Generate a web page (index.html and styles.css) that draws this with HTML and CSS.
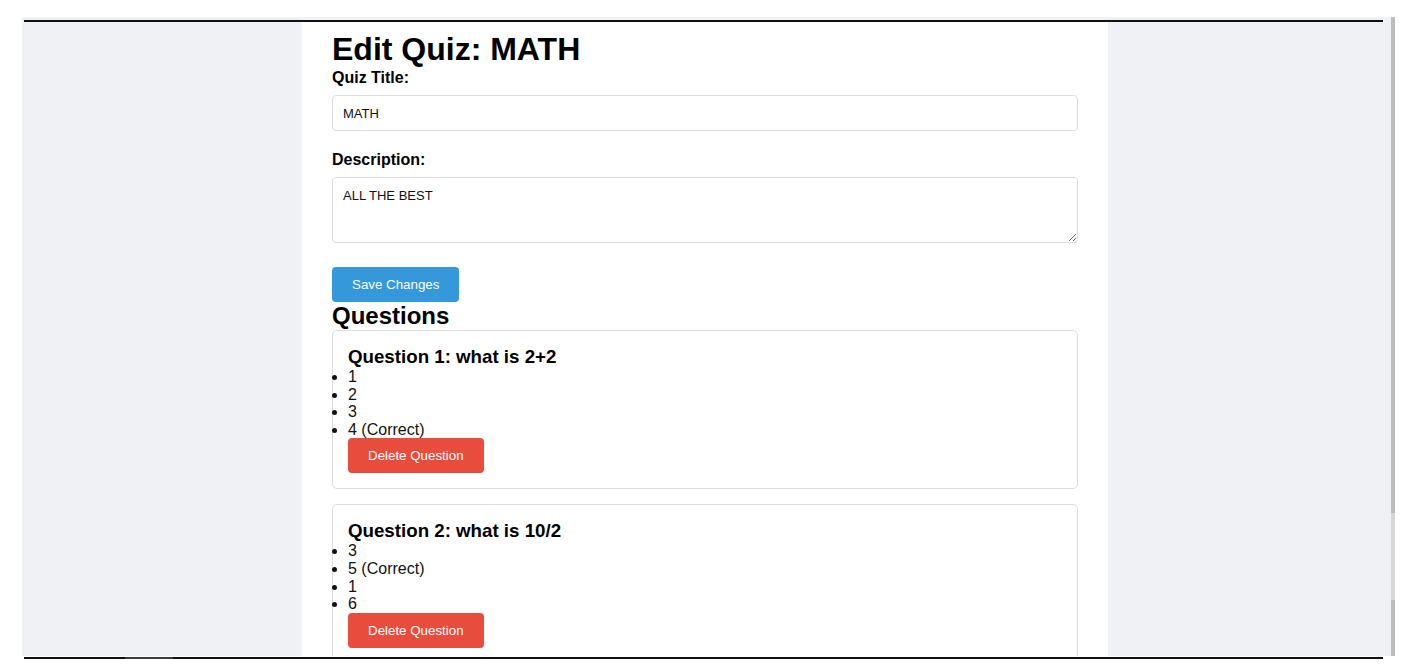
FILE: index.html
```html
<!DOCTYPE html>
<html lang="en">
<head>
<meta charset="utf-8">
<title>Edit Quiz: MATH</title>
<link rel="stylesheet" href="styles.css">
</head>
<body>
<div class="screen">
  <div class="window">
    <div class="viewport">
      <div class="rule-top"></div>
      <main class="page">
        <h1 class="title">Edit Quiz: MATH</h1>
        <form class="quiz-form">
          <label class="label" for="qt">Quiz Title:</label>
          <input class="field" id="qt" type="text" value="MATH">
          <label class="label" for="qd">Description:</label>
          <textarea class="field area" id="qd">ALL THE BEST</textarea>
          <button class="btn btn-save" type="button">Save Changes</button>
        </form>
        <h2 class="section">Questions</h2>
        <div class="card">
          <h3 class="q-title">Question 1: what is 2+2</h3>
          <ul class="options">
            <li>1</li>
            <li>2</li>
            <li>3</li>
            <li>4 (Correct)</li>
          </ul>
          <button class="btn btn-delete" type="button">Delete Question</button>
        </div>
        <div class="card">
          <h3 class="q-title">Question 2: what is 10/2</h3>
          <ul class="options">
            <li>3</li>
            <li>5 (Correct)</li>
            <li>1</li>
            <li>6</li>
          </ul>
          <button class="btn btn-delete" type="button">Delete Question</button>
        </div>
      </main>
    </div>
    <div class="scrollbar"></div>
  </div>
  <div class="rule-bottom"></div>
</div>
</body>
</html>
```
FILE: styles.css
```css
html, body {
  margin: 0;
  background: #fff;
  font-family: "Liberation Sans", Arial, sans-serif;
  color: #000;
}

.screen {
  padding: 17px 0 0 22px;
}

.window {
  display: flex;
}

.viewport {
  width: 1369px;
  height: 639px;
  background: #f0f1f5;
  overflow: hidden;
  padding-top: 3px;
  box-sizing: border-box;
  display: flex;
  flex-direction: column;
}

.rule-top {
  flex: none;
  margin-left: 2px;
  width: 1359px;
  height: 2px;
  background: #111;
}

.scrollbar {
  width: 4px;
  height: 639px;
  background: linear-gradient(#bcbcbc 0 496px, #d6d6d6 496px 583px, #bcbcbc 583px);
}

.rule-bottom {
  margin: 1px 0 0 2px;
  width: 1359px;
  height: 2px;
  background: linear-gradient(90deg, #111 0 101px, #3a3a3a 101px 149px, #111 149px);
}

.page {
  flex: 1;
  margin-left: 280px;
  width: 806px;
  background: #fff;
  padding: 9px 30px 0;
  box-sizing: border-box;
}

.title {
  font-size: 32px;
  font-weight: bold;
  margin: 0;
}

.quiz-form {
  margin: 0;
}

.label {
  display: block;
  font-size: 16px;
  font-weight: bold;
  margin: 1px 0 8px;
}

.field {
  display: block;
  width: 100%;
  box-sizing: border-box;
  height: 36px;
  margin: 0 0 20px;
  padding: 0 10px;
  border: 1px solid #ddd;
  border-radius: 4px;
  font-family: "Liberation Sans", Arial, sans-serif;
  font-size: 13px;
  color: #111;
  background: #fff;
}

.area {
  height: 66px;
  padding: 10px;
  margin-bottom: 24px;
  resize: vertical;
}

.btn {
  display: block;
  border: none;
  border-radius: 4px;
  padding: 0 20px;
  height: 35px;
  font-family: "Liberation Sans", Arial, sans-serif;
  font-size: 13.33px;
  color: #fff;
  cursor: pointer;
}

.btn-save {
  background: #3498db;
}

.btn-delete {
  background: #e74c3c;
}

.section {
  font-size: 24px;
  font-weight: bold;
  margin: 0;
}

.card {
  border: 1px solid #ddd;
  border-radius: 5px;
  padding: 15px;
  margin-bottom: 15px;
}

.q-title {
  font-size: 18.72px;
  font-weight: bold;
  margin: 0;
}

.options {
  margin: 0;
  padding: 0;
}

.options li {
  font-size: 16px;
  line-height: 17.6px;
  color: #111;
}
```
